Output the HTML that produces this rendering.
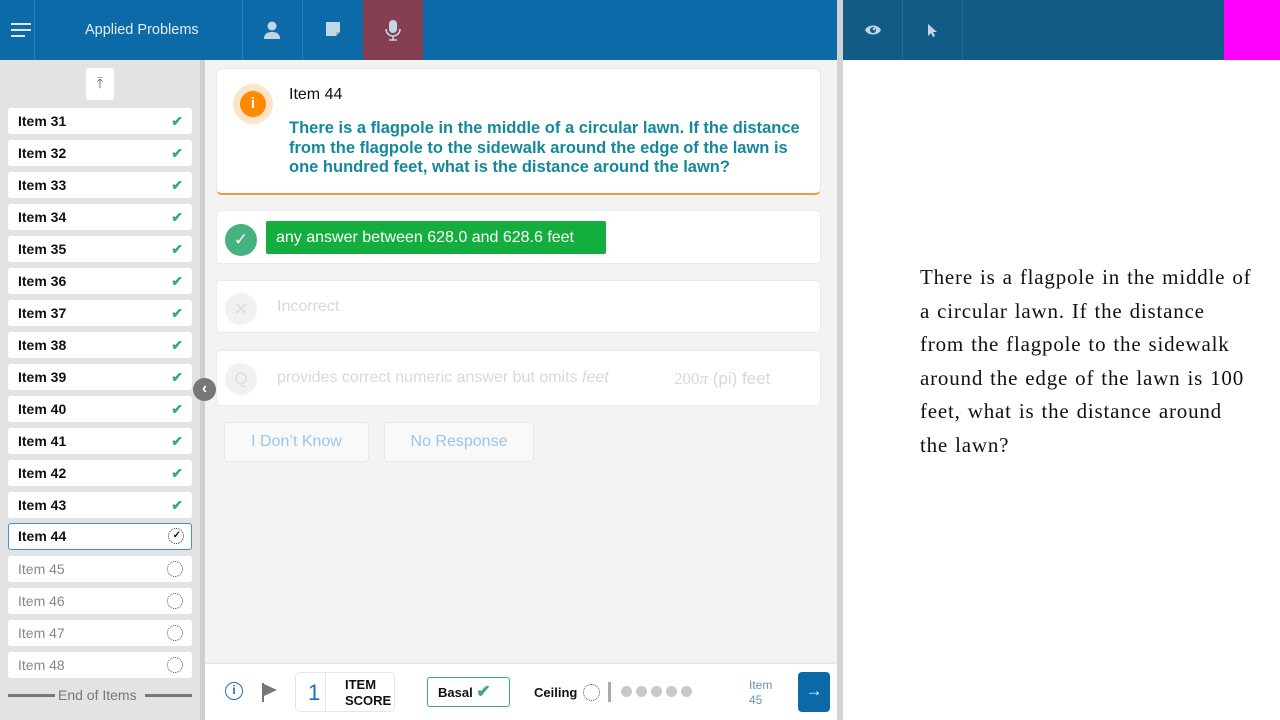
<!DOCTYPE html>
<html><head><style>
*{box-sizing:border-box;margin:0;padding:0}
body{width:1280px;height:720px;position:relative;overflow:hidden;font-family:"Liberation Sans",sans-serif;background:#fff}
.a{position:absolute}
.hdr{left:0;top:0;width:837px;height:60px;background:#0b6aa7}
.sep{top:0;width:1px;height:60px;background:#2a7fb6}
.item{position:absolute;left:8px;width:184px;height:26px;background:#fff;border-radius:3px;font-size:14px;font-weight:bold;color:#111;padding:0 0 0 10px;line-height:26px}
.item .ck{position:absolute;right:9px;top:0;color:#3aaa78;font-size:14px}
.item.p{font-weight:normal;color:#888}
.dot{position:absolute;right:9px;top:5px;width:16px;height:16px;border:1.5px dotted #555;border-radius:50%}
.row{position:absolute;left:216px;width:605px;background:#fff;border:1px solid #e8eaee;border-radius:5px}
.circ{position:absolute;left:8px;width:32px;height:32px;border-radius:50%}
</style></head><body>
<div class="a hdr"></div>
<div class="a" style="left:11px;top:23px;width:20px;height:2px;background:#dce8f2"></div>
<div class="a" style="left:11px;top:29px;width:20px;height:2px;background:#dce8f2"></div>
<div class="a" style="left:11px;top:35px;width:14px;height:2px;background:#dce8f2"></div>
<div class="a sep" style="left:34px"></div>
<div class="a" style="left:85px;top:22px;color:#e6eef5;font-size:14.5px">Applied Problems</div>
<div class="a sep" style="left:242px"></div>
<svg class="a" style="left:262px;top:20px" width="20" height="20" viewBox="0 0 20 20"><circle cx="10" cy="6" r="4.5" fill="#c4d6e6"/><path d="M2 19c0-5 3-7 8-7s8 2 8 7z" fill="#c4d6e6"/></svg>
<div class="a sep" style="left:302px"></div>
<svg class="a" style="left:325px;top:21px" width="16" height="16" viewBox="0 0 16 16"><path d="M1 1h14v10l-4 4H1z" fill="#c4d6e6"/><path d="M11 15v-4h4" fill="#9bb4cc"/></svg>
<div class="a" style="left:363px;top:0;width:60px;height:60px;background:#853f50"></div>
<svg class="a" style="left:384px;top:19px" width="18" height="22" viewBox="0 0 18 22"><rect x="5" y="1" width="8" height="13" rx="4" fill="#c4d6e6"/><path d="M2 10a7 7 0 0014 0M9 17v4M5 21h8" stroke="#c4d6e6" stroke-width="1.6" fill="none"/></svg>
<div class="a" style="left:837px;top:0;width:6px;height:720px;background:#d3d3d3"></div>
<div class="a" style="left:843px;top:0;width:381px;height:60px;background:#135b87"></div>
<div class="a" style="left:1224px;top:0;width:56px;height:60px;background:#ff00ff"></div>
<div class="a sep" style="left:902px;background:#1e6c9c"></div>
<div class="a sep" style="left:962px;background:#1e6c9c"></div>
<svg class="a" style="left:864px;top:23px" width="18" height="14" viewBox="0 0 18 14"><path d="M1 7c3-6 13-6 16 0-3 6-13 6-16 0z" fill="#c4d6e6"/><circle cx="9" cy="7" r="3" fill="#135b87"/><circle cx="10" cy="6" r="1.3" fill="#c4d6e6"/></svg>
<svg class="a" style="left:927px;top:23px" width="12" height="16" viewBox="0 0 12 16"><path d="M1 1v12l3-3 2 4 2-1-2-4h4z" fill="#c4d6e6"/></svg>

<div class="a" style="left:0;top:60px;width:200px;height:660px;background:#e3e3e3"></div>
<div class="a" style="left:200px;top:60px;width:5px;height:660px;background:#cfcfcf"></div>
<div class="a" style="left:86px;top:68px;width:28px;height:32px;background:#fff;border-radius:3px;text-align:center;line-height:32px;color:#666;font-size:15px">⤒</div>

<div class="item" style="top:108px">Item 31<span class="ck">✔</span></div>
<div class="item" style="top:140px">Item 32<span class="ck">✔</span></div>
<div class="item" style="top:172px">Item 33<span class="ck">✔</span></div>
<div class="item" style="top:204px">Item 34<span class="ck">✔</span></div>
<div class="item" style="top:236px">Item 35<span class="ck">✔</span></div>
<div class="item" style="top:268px">Item 36<span class="ck">✔</span></div>
<div class="item" style="top:300px">Item 37<span class="ck">✔</span></div>
<div class="item" style="top:332px">Item 38<span class="ck">✔</span></div>
<div class="item" style="top:364px">Item 39<span class="ck">✔</span></div>
<div class="item" style="top:396px">Item 40<span class="ck">✔</span></div>
<div class="item" style="top:428px">Item 41<span class="ck">✔</span></div>
<div class="item" style="top:460px">Item 42<span class="ck">✔</span></div>
<div class="item" style="top:492px">Item 43<span class="ck">✔</span></div>
<div class="item" style="top:523px;height:27px;border:1.5px solid #3d8fd6;padding-left:9px;line-height:24px">Item 44<span class="dot" style="top:4px;right:7px;border-color:#333"></span><span style="position:absolute;right:10px;top:0;font-size:10px">✓</span></div>
<div class="item p" style="top:556px">Item 45<span class="dot"></span></div>
<div class="item p" style="top:588px">Item 46<span class="dot"></span></div>
<div class="item p" style="top:620px">Item 47<span class="dot"></span></div>
<div class="item p" style="top:652px">Item 48<span class="dot"></span></div>
<div class="a" style="left:8px;top:694px;width:47px;height:3px;background:#777"></div>
<div class="a" style="left:145px;top:694px;width:47px;height:3px;background:#777"></div>
<div class="a" style="left:58px;top:687px;font-size:14px;color:#777">End of Items</div>

<div class="a" style="left:205px;top:60px;width:632px;height:603px;background:#f3f3f3"></div>
<div class="a" style="left:193px;top:378px;width:23px;height:23px;border-radius:50%;background:#777;color:#fff;font-size:16px;text-align:center;line-height:22px;font-weight:bold">‹</div>
<div class="a" style="left:216px;top:68px;width:605px;height:127px;background:#fff;border:1px solid #e6e8ec;border-bottom:2px solid #f29a3a;border-radius:6px"></div>
<div class="a" style="left:233px;top:84px;width:40px;height:40px;border-radius:50%;background:#fde3c8"></div>
<div class="a" style="left:240px;top:91px;width:26px;height:26px;border-radius:50%;background:#ff8a00;color:#fff;font-weight:bold;text-align:center;line-height:26px;font-size:15px">i</div>
<div class="a" style="left:289px;top:86px;font-size:16px;color:#111">Item 44</div>
<div class="a" style="left:289px;top:119px;white-space:nowrap;font-size:16.5px;line-height:19.5px;font-weight:bold;color:#13899a">There is a flagpole in the middle of a circular lawn. If the distance<br>from the flagpole to the sidewalk around the edge of the lawn is<br>one hundred feet, what is the distance around the lawn?</div>

<div class="row" style="top:210px;height:54px"><div class="circ" style="top:13px;background:#46b27f;color:#fff;text-align:center;line-height:32px;font-size:17px">✓</div><div class="a" style="left:49px;top:10px;width:340px;height:33px;background:#14ae3e;color:#fff;font-size:16px;line-height:33px;padding-left:10px;border-radius:2px">any answer between 628.0 and 628.6 feet</div></div>
<div class="row" style="top:280px;height:53px"><div class="circ" style="top:12px;background:#f1f1f1;color:#ddd;text-align:center;line-height:32px;font-size:18px">✕</div><div class="a" style="left:60px;top:17px;font-size:16px;color:#d8d8d8">Incorrect</div></div>
<div class="row" style="top:350px;height:56px"><div class="circ" style="top:12px;background:#f1f1f1;color:#ddd;text-align:center;line-height:32px;font-size:17px">Q</div><div class="a" style="left:60px;top:18px;font-size:16px;color:#d8d8d8">provides correct numeric answer but omits <i>feet</i></div><div class="a" style="left:457px;top:18px;font-size:17px;color:#d8d8d8"><span style="font-family:'Liberation Serif',serif">200<i>π</i></span> (pi) feet</div></div>
<div class="a" style="left:224px;top:422px;width:145px;height:40px;background:#f9f9f9;border:1px solid #e8e8e8;border-radius:4px;color:#9cc5ea;font-size:16px;text-align:center;line-height:38px">I Don’t Know</div>
<div class="a" style="left:384px;top:422px;width:150px;height:40px;background:#f9f9f9;border:1px solid #e8e8e8;border-radius:4px;color:#9cc5ea;font-size:16px;text-align:center;line-height:38px">No Response</div>

<div class="a" style="left:205px;top:663px;width:632px;height:1px;background:#e6e6e6"></div>
<div class="a" style="left:225px;top:682px;width:18px;height:18px;border:1.6px solid #1a6fb8;border-radius:50%;color:#1a6fb8;font-size:12px;font-weight:bold;text-align:center;line-height:15px">i</div>
<svg class="a" style="left:261px;top:682px" width="18" height="20" viewBox="0 0 18 20"><path d="M2 1v19" stroke="#777" stroke-width="2"/><path d="M3 2l13 6-13 6z" fill="#777"/></svg>
<div class="a" style="left:295px;top:672px;width:100px;height:40px;border:1px solid #e6e6e6;border-radius:5px"></div>
<div class="a" style="left:325px;top:673px;width:1px;height:38px;background:#e6e6e6"></div>
<div class="a" style="left:308px;top:680px;font-size:22px;color:#1a6fb8">1</div>
<div class="a" style="left:345px;top:677px;font-size:13px;font-weight:bold;line-height:16px;color:#111">ITEM<br>SCORE</div>
<div class="a" style="left:427px;top:677px;width:83px;height:30px;border:1.5px solid #3aaa78;border-radius:3px;font-size:13px;font-weight:bold;line-height:27px;padding-left:10px;color:#111">Basal <span style="color:#3aaa78;font-size:17px">✔</span></div>
<div class="a" style="left:534px;top:685px;font-size:13px;font-weight:bold;color:#111">Ceiling</div>
<div class="a" style="left:583px;top:684px;width:17px;height:17px;border:1.5px dotted #555;border-radius:50%"></div>
<div class="a" style="left:608px;top:682px;width:3px;height:20px;background:#aaa"></div>
<div class="a" style="left:621px;top:686px;width:11px;height:11px;border-radius:50%;background:#c8c8c8;box-shadow:15px 0 #c8c8c8,30px 0 #c8c8c8,45px 0 #c8c8c8,60px 0 #c8c8c8"></div>
<div class="a" style="left:749px;top:678px;font-size:12px;line-height:15px;color:#6a91b8">Item<br>45</div>
<div class="a" style="left:798px;top:672px;width:32px;height:40px;border-radius:4px;background:#0b6aa7;color:#fff;font-size:17px;text-align:center;line-height:38px">→</div>

<div class="a" style="left:920px;top:261px;white-space:nowrap;font-family:'Liberation Serif',serif;font-size:21px;line-height:33.5px;color:#111;letter-spacing:0.8px;word-spacing:1px">There is a flagpole in the middle of<br>a circular lawn. If the distance<br>from the flagpole to the sidewalk<br>around the edge of the lawn is 100<br>feet, what is the distance around<br>the lawn?</div>
</body></html>
